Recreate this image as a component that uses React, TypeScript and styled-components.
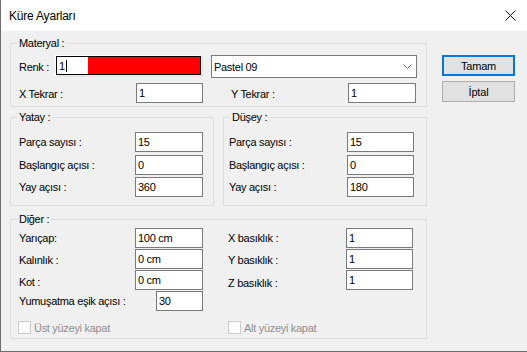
import React from "react";
import styled, { createGlobalStyle } from "styled-components";

const GlobalStyle = createGlobalStyle`
  html, body { margin: 0; padding: 0; background: #f0f0f0; }
  body { font-family: "Liberation Sans", Arial, sans-serif; }
`;

const Window = styled.div`
  width: 527px;
  height: 352px;
  box-sizing: border-box;
  border-left: 1px solid #6e6e6e;
  border-bottom: 1px solid #6e6e6e;
  display: flex;
  flex-direction: column;
  background: #f0f0f0;
  font-family: "Liberation Sans", Arial, sans-serif;
  font-size: 11px;
  letter-spacing: -0.3px;
  color: #000;
  overflow: hidden;
`;

const TitleBar = styled.div`
  height: 31px;
  flex: none;
  background: #fff;
  display: flex;
  align-items: center;
  justify-content: space-between;
  padding: 0 11px 0 8px;
`;

const Title = styled.span`
  font-size: 12px;
  letter-spacing: -0.2px;
`;

const CloseButton = styled.span`
  display: flex;
  width: 11px;
  height: 11px;
`;

const Body = styled.div`
  flex: 1;
  display: flex;
  padding: 12px 0 0 9px;
`;

const MainCol = styled.div`
  width: 417px;
  display: flex;
  flex-direction: column;
`;

const Group = styled.div<{ $h: number; $pt: number; $pl: number; $mt?: number; $w?: number }>`
  position: relative;
  box-sizing: border-box;
  height: ${(p) => p.$h}px;
  width: ${(p) => (p.$w ? `${p.$w}px` : "auto")};
  margin-top: ${(p) => p.$mt ?? 0}px;
  border: 1px solid #dcdcdc;
  padding: ${(p) => p.$pt}px 0 0 ${(p) => p.$pl}px;
`;

const Legend = styled.span`
  position: absolute;
  top: -7px;
  left: 6px;
  padding: 0 2px;
  line-height: 13px;
  background: #f0f0f0;
`;

const GroupPair = styled.div`
  display: flex;
  gap: 9px;
  margin-top: 10px;
`;

const Row = styled.div<{ $mt?: number; $h?: number }>`
  display: flex;
  align-items: flex-start;
  height: ${(p) => p.$h ?? 20}px;
  margin-top: ${(p) => p.$mt ?? 0}px;
`;

const Label = styled.span<{ $w: number; $ml?: number; $dy?: number }>`
  flex: none;
  width: ${(p) => p.$w}px;
  margin-left: ${(p) => p.$ml ?? 0}px;
  align-self: center;
  white-space: nowrap;
  position: relative;
  top: ${(p) => p.$dy ?? 0}px;
`;

const TextBox = styled.input<{ $w: number }>`
  flex: none;
  box-sizing: border-box;
  width: ${(p) => p.$w}px;
  height: 20px;
  margin: 0;
  padding: 0 2px;
  border: 1px solid #7a7a7a;
  background: #fff;
  font-family: inherit;
  font-size: 11px;
  letter-spacing: -0.3px;
  color: #000;
  outline: none;
`;

const ColorBox = styled.div`
  flex: none;
  box-sizing: border-box;
  width: 148px;
  height: 22px;
  display: flex;
  border-style: solid;
  border-width: 1px 2px 2px 1px;
  border-color: #fff #e6e6e6 #e6e6e6 #fff;
`;

const ColorFrame = styled.div`
  flex: 1;
  display: flex;
  border: 1px solid #000;
`;

const ColorText = styled.div`
  width: 31px;
  background: #fff;
  display: flex;
  align-items: center;
  padding-left: 2px;
  box-sizing: border-box;
`;

const Caret = styled.span`
  display: inline-block;
  width: 1px;
  height: 12px;
  background: #000;
  margin-left: 1px;
`;

const ColorSwatch = styled.div<{ $color: string }>`
  flex: 1;
  background: ${(p) => p.$color};
`;

const Combo = styled.div`
  flex: none;
  box-sizing: border-box;
  width: 206px;
  height: 23px;
  margin-left: 8px;
  border: 1px solid #7a7a7a;
  background: #fff;
  display: flex;
  align-items: center;
  justify-content: space-between;
  padding: 0 4px 0 2px;
`;

const OtherGrid = styled.div`
  display: grid;
  grid-template-columns: 209px 1fr;
  grid-auto-rows: 20px;
  row-gap: 1px;
`;

const Cell = styled.div`
  display: flex;
  align-items: flex-start;
`;

const CheckGrid = styled.div`
  display: grid;
  grid-template-columns: 210px 1fr;
  margin-top: 10px;
  margin-left: -1px;
`;

const CheckItem = styled.label`
  display: flex;
  align-items: center;
  gap: 3px;
  color: #8f8f8f;
`;

const CheckBox = styled.span`
  flex: none;
  box-sizing: border-box;
  width: 13px;
  height: 13px;
  border: 1px solid #cccccc;
  background: #fbfbfb;
`;

const ButtonCol = styled.div`
  display: flex;
  flex-direction: column;
  gap: 5px;
  padding-top: 12px;
  margin-left: 15px;
`;

const Button = styled.button<{ $default?: boolean }>`
  box-sizing: border-box;
  width: 73px;
  height: 21px;
  margin: 0;
  padding: 0;
  background: #e1e1e1;
  border: ${(p) => (p.$default ? "2px solid #0078d7" : "1px solid #adadad")};
  font-family: inherit;
  font-size: 11px;
  letter-spacing: -0.2px;
  color: #000;
`;

type Field = { label: string; value: string; dy?: number };

const yatay: Field[] = [
  { label: "Parça sayısı :", value: "15" },
  { label: "Başlangıç açısı :", value: "0" },
  { label: "Yay açısı :", value: "360" },
];

const dusey: Field[] = [
  { label: "Parça sayısı :", value: "15" },
  { label: "Başlangıç açısı :", value: "0" },
  { label: "Yay açısı :", value: "180" },
];

const rowOffsets = [0, 3, 2];

export default function App() {
  return (
    <>
      <GlobalStyle />
      <Window>
        <TitleBar>
          <Title>Küre Ayarları</Title>
          <CloseButton>
            <svg width="11" height="11" viewBox="0 0 11 11">
              <path d="M0.5 0.5 L10.5 10.5 M10.5 0.5 L0.5 10.5" stroke="#111" strokeWidth="1" fill="none" />
            </svg>
          </CloseButton>
        </TitleBar>
        <Body>
          <MainCol>
            <Group $h={64} $pt={11} $pl={8}>
              <Legend>Materyal :</Legend>
              <Row $h={23}>
                <Label $w={36}>Renk :</Label>
                <ColorBox>
                  <ColorFrame>
                    <ColorText>
                      1<Caret />
                    </ColorText>
                    <ColorSwatch $color="#ff0000" />
                  </ColorFrame>
                </ColorBox>
                <Combo>
                  <span>Pastel 09</span>
                  <svg width="9" height="5" viewBox="0 0 9 5">
                    <path d="M0.5 0.5 L4.5 4.5 L8.5 0.5" stroke="#707070" strokeWidth="1" fill="none" />
                  </svg>
                </Combo>
              </Row>
              <Row $mt={5}>
                <Label $w={117} $dy={1}>X Tekrar :</Label>
                <TextBox $w={67} readOnly value="1" />
                <Label $w={117} $ml={28} $dy={1}>Y Tekrar :</Label>
                <TextBox $w={68} readOnly value="1" />
              </Row>
            </Group>

            <GroupPair>
              <Group $h={89} $pt={14} $pl={8} $w={204}>
                <Legend>Yatay :</Legend>
                {yatay.map((f, i) => (
                  <Row key={f.label} $mt={rowOffsets[i]}>
                    <Label $w={116}>{f.label}</Label>
                    <TextBox $w={68} readOnly value={f.value} />
                  </Row>
                ))}
              </Group>
              <Group $h={89} $pt={14} $pl={5} $w={204}>
                <Legend>Düşey :</Legend>
                {dusey.map((f, i) => (
                  <Row key={f.label} $mt={rowOffsets[i]}>
                    <Label $w={118}>{f.label}</Label>
                    <TextBox $w={67} readOnly value={f.value} />
                  </Row>
                ))}
              </Group>
            </GroupPair>

            <Group $h={120} $pt={8} $pl={8} $mt={13}>
              <Legend>Diğer :</Legend>
              <OtherGrid>
                <Cell>
                  <Label $w={116}>Yarıçap:</Label>
                  <TextBox $w={68} readOnly value="100 cm" />
                </Cell>
                <Cell>
                  <Label $w={118}>X basıklık :</Label>
                  <TextBox $w={67} readOnly value="1" />
                </Cell>
                <Cell>
                  <Label $w={116} $dy={1}>Kalınlık :</Label>
                  <TextBox $w={68} readOnly value="0 cm" />
                </Cell>
                <Cell>
                  <Label $w={118} $dy={1}>Y basıklık :</Label>
                  <TextBox $w={67} readOnly value="1" />
                </Cell>
                <Cell>
                  <Label $w={116} $dy={2}>Kot :</Label>
                  <TextBox $w={68} readOnly value="0 cm" />
                </Cell>
                <Cell>
                  <Label $w={118} $dy={3}>Z basıklık :</Label>
                  <TextBox $w={67} readOnly value="1" />
                </Cell>
                <Cell>
                  <Label $w={137}>Yumuşatma eşik açısı :</Label>
                  <TextBox $w={47} readOnly value="30" />
                </Cell>
                <Cell />
              </OtherGrid>
              <CheckGrid>
                <CheckItem>
                  <CheckBox />
                  Üst yüzeyi kapat
                </CheckItem>
                <CheckItem>
                  <CheckBox />
                  Alt yüzeyi kapat
                </CheckItem>
              </CheckGrid>
            </Group>
          </MainCol>
          <ButtonCol>
            <Button $default>Tamam</Button>
            <Button>İptal</Button>
          </ButtonCol>
        </Body>
      </Window>
    </>
  );
}
